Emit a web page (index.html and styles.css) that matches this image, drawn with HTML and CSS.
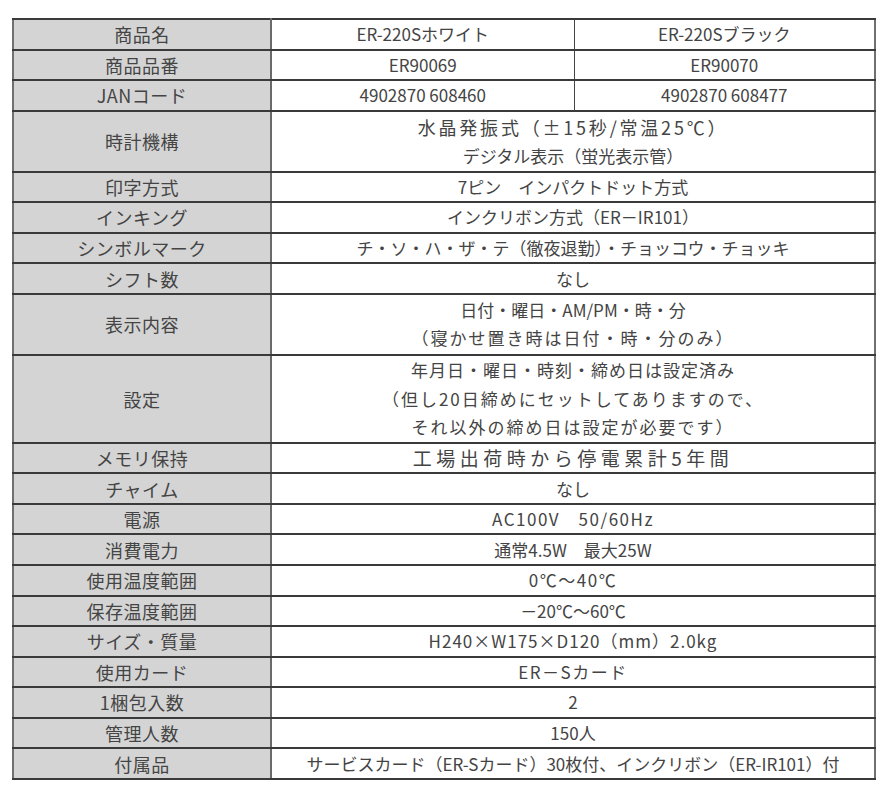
FILE: index.html
```html
<!DOCTYPE html>
<html lang="ja">
<head>
<meta charset="utf-8">
<link rel="stylesheet" href="styles.css">
</head>
<body>
<table class="spec">
  <colgroup><col class="c-label"><col class="c-a"><col class="c-b"></colgroup>
  <tr class="l1"><th>商品名</th><td>ER-220Sホワイト</td><td>ER-220Sブラック</td></tr>
  <tr class="l1"><th>商品品番</th><td>ER90069</td><td>ER90070</td></tr>
  <tr class="l1"><th>JANコード</th><td>4902870 608460</td><td>4902870 608477</td></tr>
  <tr class="l2"><th>時計機構</th><td colspan="2"><span class="wide-a">水晶発振式（±15秒/常温25℃）</span><br>デジタル表示（蛍光表示管）</td></tr>
  <tr class="l1"><th>印字方式</th><td colspan="2">7ピン　インパクトドット方式</td></tr>
  <tr class="l1"><th>インキング</th><td colspan="2">インクリボン方式（ER－IR101）</td></tr>
  <tr class="l1"><th>シンボルマーク</th><td colspan="2">チ・ソ・ハ・ザ・テ（徹夜退勤）・チョッコウ・チョッキ</td></tr>
  <tr class="l1"><th>シフト数</th><td colspan="2">なし</td></tr>
  <tr class="l2"><th>表示内容</th><td colspan="2">日付・曜日・AM/PM・時・分<br><span class="sp2">（寝かせ置き時は日付・時・分のみ）</span></td></tr>
  <tr class="l3"><th>設定</th><td colspan="2"><span class="sp1">年月日・曜日・時刻・締め日は設定済み</span><br><span class="sp2">（但し20日締めにセットしてありますので、</span><br><span class="sp2">それ以外の締め日は設定が必要です）</span></td></tr>
  <tr class="l1"><th>メモリ保持</th><td colspan="2"><span class="wide-b">工場出荷時から停電累計5年間</span></td></tr>
  <tr class="l1"><th>チャイム</th><td colspan="2">なし</td></tr>
  <tr class="l1"><th>電源</th><td colspan="2"><span class="sp15">AC100V　50/60Hz</span></td></tr>
  <tr class="l1"><th>消費電力</th><td colspan="2">通常4.5W　最大25W</td></tr>
  <tr class="l1"><th>使用温度範囲</th><td colspan="2"><span class="sp15">0℃～40℃</span></td></tr>
  <tr class="l1"><th>保存温度範囲</th><td colspan="2">－20℃～60℃</td></tr>
  <tr class="l1"><th>サイズ・質量</th><td colspan="2"><span class="sp1">H240×W175×D120（mm）2.0kg</span></td></tr>
  <tr class="l1"><th>使用カード</th><td colspan="2"><span class="sp15">ER－Sカード</span></td></tr>
  <tr class="l1"><th>1梱包入数</th><td colspan="2">2</td></tr>
  <tr class="l1"><th>管理人数</th><td colspan="2">150人</td></tr>
  <tr class="l1"><th>付属品</th><td colspan="2">サービスカード（ER-Sカード）30枚付、インクリボン（ER-IR101）付</td></tr>
</table>
</body>
</html>
```

FILE: styles.css
```css
html, body {
  background: #ffffff;
}
body {
  margin: 0;
  padding: 18px 0 0 12px;
  font-family: "Noto Sans CJK JP", "Noto Sans", sans-serif;
  color: #444444;
}
.spec {
  border-collapse: collapse;
  table-layout: fixed;
  width: 862px;
  border: 2px solid #707070;
  font-size: 17px;
}
.c-label { width: 258px; }
.c-a { width: 303px; }
.c-b { width: 301px; }
.spec th,
.spec td {
  padding: 0;
  text-align: center;
  vertical-align: middle;
  font-weight: normal;
  border-top: 2px solid #3a3a3a;
  border-bottom: 2px solid #3a3a3a;
  line-height: 26px;
  white-space: nowrap;
}
.spec tr.l2 td {
  line-height: 28px;
}
.spec tr.l3 td {
  line-height: 28.5px;
}
.spec th {
  background: #d4d4d4;
  border-right: 2px solid #6a6a6a;
  font-size: 18px;
  letter-spacing: 0.5px;
}
.spec td + td {
  border-left: 1px solid #444444;
}
.spec tr.l1 { height: 30.55px; }
.spec tr.l2 { height: 61px; }
.spec tr.l3 { height: 88px; }

.sp1 { letter-spacing: 1px; }
.sp15 { letter-spacing: 1.5px; }
.sp2 { letter-spacing: 2px; }
.wide-a { font-size: 18px; letter-spacing: 2.8px; }
.wide-b { font-size: 19px; letter-spacing: 4.5px; }
```
